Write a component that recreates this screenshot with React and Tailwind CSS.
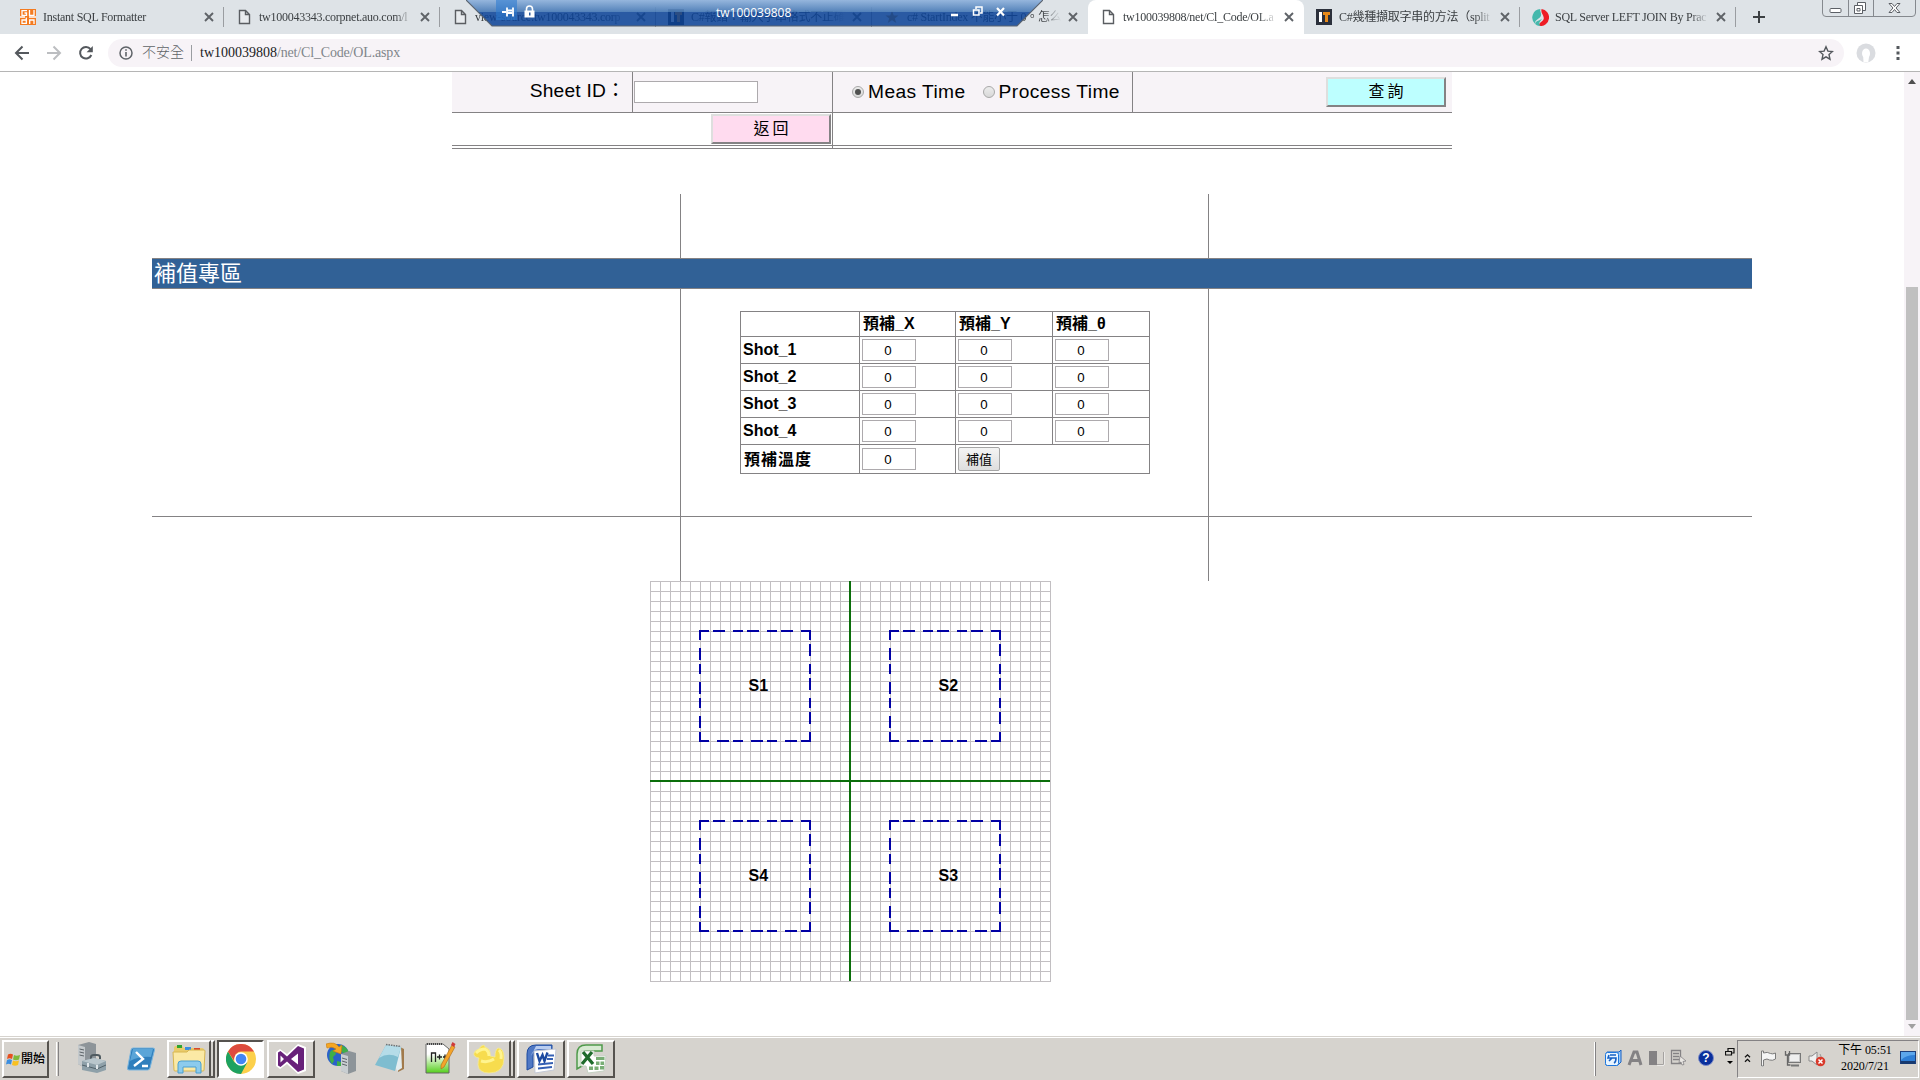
import React from "react";

const SERIF = "font-['Liberation_Serif','Noto_Sans_CJK_TC',serif]";
const SANS = "font-['Liberation_Sans','Noto_Sans_CJK_TC',sans-serif]";

/* ---------- small icons ---------- */
const CloseX = ({ className = "" }) => (
  <svg width="10" height="10" viewBox="0 0 10 10" className={className}>
    <path d="M1 1l8 8M9 1l-8 8" stroke="#5f6368" strokeWidth="1.9" fill="none" />
  </svg>
);
const PageIcon = () => (
  <svg width="16" height="16" viewBox="0 0 16 16">
    <path d="M3.5 1.5h6l4 4v9h-10z M9.5 1.5v4h4" fill="#fff" fillOpacity="0.3" stroke="#5a5d61" strokeWidth="1.4" />
  </svg>
);
const GuduIcon = () => (
  <svg width="16" height="16" viewBox="0 0 16 16">
    <rect width="16" height="16" fill="#f47b20" />
    <path d="M7 1.700H2v4.600h4.500V4H4.500M9.500 1v5.300H14V1M6.300 8.500V14.300H2V11h4M9.700 15v-4h4.300v4M0 8h5M9 8h7" stroke="#fff" strokeWidth="1.300" fill="none" />
  </svg>
);
const ItIcon = () => (
  <svg width="16" height="16" viewBox="0 0 16 16">
    <rect width="16" height="16" fill="#2b303b" />
    <rect x="3" y="3" width="3" height="10" fill="#fff" />
    <path d="M7 3h7v3h-2v7H9V6H7z" fill="#e88a1a" />
  </svg>
);
const StarIcon = () => (
  <svg width="16" height="16" viewBox="0 0 16 16">
    <path d="M8 2l1.800 4.500h4.700l-3.700 3.100L12.300 14 8 11.300 3.700 14l1.500-4.400L1.500 6.500h4.700z" fill="#b0803a" />
  </svg>
);
const SwirlIcon = () => (
  <svg width="17" height="17" viewBox="0 0 16 16">
    <path d="M8 0A8 8 0 0 0 3 14C2 10 8 9 8.500 6 9 3 7 2 8 0z" fill="#45b8ac" />
    <path d="M9 0a8 8 0 0 1-2 16c-2-3 5-4 4-8C10.500 5 8 4 9 0z" fill="#ee1c25" />
    <path d="M3 14c2 2 4 2 5 2-3-3 1-5 1.500-7C8 11 3 11 3 14z" fill="#45b8ac" />
  </svg>
);

const tabs = [
  { icon: <GuduIcon />, title: "Instant SQL Formatter" },
  { icon: <PageIcon />, title: "tw100043343.corpnet.auo.com/l" },
  { icon: <PageIcon />, title: "view-source:tw100043343.corp" },
  { icon: <ItIcon />, title: "C#報錯：輸入字串格式不正確" },
  { icon: <StarIcon />, title: "c# StartIndex 不能小于 0。怎么" },
  { icon: <PageIcon />, title: "tw100039808/net/Cl_Code/OL.a", active: true },
  { icon: <ItIcon />, title: "C#幾種擷取字串的方法（split" },
  { icon: <SwirlIcon />, title: "SQL Server LEFT JOIN By Prac" },
];

const Tab = ({ icon, title, active, noSep }) => (
  <div
    className={
      "relative flex h-[34px] w-[216px] shrink-0 items-center pl-3 " +
      (active ? "rounded-t-lg bg-white" : "")
    }
  >
    <span className="flex w-6 shrink-0">{icon}</span>
    <span className="-ml-px w-[154px] shrink-0 overflow-hidden whitespace-nowrap text-[12px] leading-[20px] tracking-[-0.25px] text-[#3c4043] [mask-image:linear-gradient(to_right,black_88%,transparent)]">
      {title}
    </span>
    <CloseX className="ml-[7px]" />
    {!noSep && !active && <span className="ml-auto h-5 w-px bg-[#9a9da1]" />}
  </div>
);

const RemoteBar = () => (
  <div className="absolute left-[466px] top-0 h-[27px] w-[577px]">
    <svg width="577" height="27" viewBox="0 0 577 27" className="absolute inset-0">
      <defs>
        <linearGradient id="rdpTop" x1="0" y1="0" x2="0" y2="1">
          <stop offset="0" stopColor="#8fb2dc" />
          <stop offset="1" stopColor="#4779b5" />
        </linearGradient>
        <clipPath id="rdpShape">
          <path d="M0 0h577l-26 26H26z" />
        </clipPath>
      </defs>
      <g clipPath="url(#rdpShape)">
        <rect width="577" height="12" fill="url(#rdpTop)" fillOpacity="0.92" />
        <rect y="12" width="577" height="15" fill="#0a4297" fillOpacity="0.85" />
        <rect x="30" y="0" width="21" height="20" fill="#2f7bd0" fillOpacity="0.6" />
      </g>
      <path d="M0 0l26 26h525l26-26" fill="none" stroke="#5b6470" strokeWidth="1.2" />
      <path d="M36 12h4M41 7.500v9M41 10.500h5M41 13h5M47 7.500v9" stroke="#fff" strokeWidth="1.800" />
      <path d="M60.500 11V9a3 3 0 0 1 6 0v2" fill="none" stroke="#fff" strokeWidth="1.600" />
      <rect x="58.500" y="10.500" width="10" height="7" fill="#fff" />
      <rect x="63" y="12.500" width="1.500" height="3" fill="#2a5a9f" />
      <path d="M485 15h7" stroke="#fff" strokeWidth="2.500" />
      <path d="M510 9V7h6v6h-2M507.500 10h5.500v5h-5.500z" fill="none" stroke="#fff" strokeWidth="1.500" />
      <path d="M531 8l7 7.500M538 8l-7 7.500" stroke="#fff" strokeWidth="2.200" />
    </svg>
    <span className="absolute left-[250px] top-[4px] font-['Open_Sans',sans-serif] text-[12px] leading-[18px] text-white">
      tw100039808
    </span>
  </div>
);

const WindowButtons = () => (
  <svg width="94" height="18" viewBox="0 0 94 18" className="absolute right-[4px] top-0">
    <path d="M.5 0v13q0 3.500 3.500 3.500h86q3.500 0 3.500-3.500V0M26.500 0v16M51.500 0v16" fill="none" stroke="#85898e" />
    <rect x="8" y="8.500" width="11" height="4" rx="1" fill="#fff" stroke="#5c6066" />
    <path d="M35.500 5.500V2.500h8v8h-3M32.500 5.500h8v8h-8zM35 8.500h3v2.500h-3z" fill="#fff" stroke="#5c6066" />
    <path d="M67 3.500h3l2.500 3 2.500-3h3l-4 4.500 4 4.500h-3l-2.500-3-2.500 3h-3l4-4.500z" fill="#fff" stroke="#5c6066" />
  </svg>
);

const TabStrip = () => (
  <div className={"relative flex h-[34px] shrink-0 bg-[#dee3e7] pl-2 " + SERIF}>
    {tabs.map((t, i) => (
      <Tab key={i} {...t} noSep={i === 4} />
    ))}
    <svg width="14" height="14" viewBox="0 0 14 14" className="ml-4 mt-[10px]">
      <path d="M7 1v12M1 7h12" stroke="#3c4043" strokeWidth="2" />
    </svg>
    <RemoteBar />
    <WindowButtons />
  </div>
);

const Toolbar = () => (
  <div className={"flex h-[38px] shrink-0 items-center border-b border-[#b5b5b5] bg-white pl-[14px] " + SERIF}>
    <svg width="16" height="16" viewBox="0 0 16 16">
      <path d="M15 8H2.500M8.500 1.500L2 8l6.500 6.500" fill="none" stroke="#54585d" strokeWidth="2" />
    </svg>
    <svg width="16" height="16" viewBox="0 0 16 16" className="ml-4">
      <path d="M1 8h12.500M7.500 1.500L14 8l-6.500 6.500" fill="none" stroke="#bcbec1" strokeWidth="2" />
    </svg>
    <svg width="16" height="16" viewBox="0 0 16 16" className="ml-4">
      <path d="M13.300 10A5.800 5.800 0 1 1 12.500 4.200" fill="none" stroke="#54585d" strokeWidth="2" />
      <path d="M14.800 1v6.200H8.600z" fill="#54585d" />
    </svg>
    <div className="ml-[14px] flex h-7 w-[1736px] items-center rounded-full bg-[#f7f3f7] pl-[11px] pr-[10px] text-[14px] leading-none">
      <svg width="14" height="14" viewBox="0 0 14 14">
        <circle cx="7" cy="7" r="6" fill="none" stroke="#5f6368" strokeWidth="1.500" />
        <path d="M7 6v4.500M7 3.200v1.600" stroke="#5f6368" strokeWidth="1.600" />
      </svg>
      <span className="ml-[9px] font-light text-[#5f6368]">不安全</span>
      <span className="ml-[7px] mr-[8px] h-4 w-px bg-[#9a9da1]" />
      <span className="pt-px text-[#202124]">tw100039808</span>
      <span className="pt-px tracking-[-0.17px] text-[#80858a]">/net/Cl_Code/OL.aspx</span>
      <svg width="16" height="16" viewBox="0 0 16 16" className="ml-auto">
        <path d="M8 1.800l1.900 4.300 4.600.4-3.500 3.100 1 4.600L8 11.800l-4 2.400 1-4.600L1.500 6.500l4.600-.4z" fill="none" stroke="#54585d" strokeWidth="1.400" />
      </svg>
    </div>
    <svg width="20" height="20" viewBox="0 0 20 20" className="ml-[12px]">
      <circle cx="10" cy="10" r="9.500" fill="#dadce0" />
      <path d="M7.500 19l-.3-5C5 11 6 5.500 10 5.500s5 5.500 3 8.500l-.7 5z" fill="#fff" />
    </svg>
    <svg width="4" height="16" viewBox="0 0 4 16" className="ml-[20px]">
      <rect x=".5" y="1" width="3" height="3" fill="#54585d" />
      <rect x=".5" y="6.500" width="3" height="3" fill="#54585d" />
      <rect x=".5" y="12" width="3" height="3" fill="#54585d" />
    </svg>
  </div>
);

/* ---------- page ---------- */
const Radio = ({ checked }) => (
  <span className="flex h-3 w-3 items-center justify-center rounded-full border border-[#a8a8a8] bg-gradient-to-b from-[#ececec] to-[#d8d8d8]">
    {checked && <span className="h-1.5 w-1.5 rounded-full bg-[#505050]" />}
  </span>
);

const bevel =
  "flex h-[30px] w-[120px] items-center justify-center border-2 border-t-[#dedfde] border-l-[#dedfde] border-r-[#848284] border-b-[#848284] pl-[3px] text-[16px] leading-none tracking-[3px] text-black";

const QueryPanel = () => (
  <div className={"ml-[452px] w-[1000px] text-[19.2px] leading-none text-black " + SANS}>
    <div className="flex h-[41px] border-b border-[#848284] bg-[#f7f3f7]">
      <div className="flex w-[181px] items-center justify-end border-r border-[#848284] pb-[2px] pr-[7px]">
        <span className="tracking-[0.2px]">Sheet ID</span>
        <span className="w-[19px]">：</span>
      </div>
      <div className="w-[200px] border-r border-[#848284] pl-px pt-[9px]">
        <div className="h-[22px] w-[124px] border border-[#adaaad] bg-white" />
      </div>
      <div className="flex w-[300px] items-center border-r border-[#848284] pl-[19px] tracking-[0.42px]">
        <Radio checked />
        <span className="ml-[4px]">Meas Time</span>
        <span className="ml-[17px]">
          <Radio />
        </span>
        <span className="ml-[4px]">Process Time</span>
      </div>
      <div className="flex w-[319px] justify-end pr-[6px] pt-[5px]">
        <div className={bevel + " bg-[#bdffff]"}>查詢</div>
      </div>
    </div>
    <div className="flex h-[36px] border-b-4 border-double border-[#848284]">
      <div className="flex h-[36px] w-[381px] justify-end border-r border-[#848284] pr-px pt-px">
        <div className={bevel + " bg-[#ffdbef]"}>返回</div>
      </div>
    </div>
  </div>
);

const NumBox = () => (
  <div className="h-[22px] w-[54px] border border-[#adaaad] bg-white pr-[2px] text-center text-[13.3px] leading-[21px] text-black">
    0
  </div>
);

const Cell = ({ children, className = "" }) => (
  <div className={"flex items-center border-r border-b border-[#848284] pl-[2px] " + className}>{children}</div>
);

const OffsetTable = () => (
  <div
    className={
      "ml-[59px] grid w-[410px] grid-cols-[119px_96px_97px_97px] grid-rows-[25px_27px_27px_27px_27px_29px] border-l border-t border-[#848284] text-[16px] leading-none text-black " +
      SANS
    }
  >
    <Cell />
    {["預補_X", "預補_Y", "預補_θ"].map((h) => (
      <Cell key={h} className="pl-[3px] font-bold">
        {h}
      </Cell>
    ))}
    {[1, 2, 3, 4].map((n) => (
      <React.Fragment key={n}>
        <Cell className="font-bold">Shot_{n}</Cell>
        <Cell>
          <NumBox />
        </Cell>
        <Cell>
          <NumBox />
        </Cell>
        <Cell>
          <NumBox />
        </Cell>
      </React.Fragment>
    ))}
    <Cell className="pl-[3px] pt-px font-bold tracking-[1px]">預補溫度</Cell>
    <Cell>
      <NumBox />
    </Cell>
    <Cell className="col-span-2">
      <div className="flex h-6 w-[42px] items-center justify-center rounded-[2px] border border-[#a5a5a5] bg-gradient-to-b from-[#f4f4f4] to-[#dedede] text-[13px]">
        補值
      </div>
    </Cell>
  </div>
);

const Columns = ({ height, children }) => (
  <div className={"flex " + height}>
    <div className="w-[528px]" />
    <div className="w-[528px] border-l border-[#848284]">{children}</div>
    <div className="w-[544px] border-l border-[#848284]" />
  </div>
);

const ticks = Array.from({ length: 41 }, (_, i) => i * 10 + 0.5);
const shots = [
  { x: 50, y: 50, label: "S1" },
  { x: 240, y: 50, label: "S2" },
  { x: 240, y: 240, label: "S3" },
  { x: 50, y: 240, label: "S4" },
];

const ShotMap = () => (
  <svg width="401" height="401" viewBox="0 0 401 401" className="ml-[650px] block">
    {ticks.map((t) => (
      <path key={t} d={`M${t} 0V401M0 ${t}H401`} stroke="#c2bfc2" strokeWidth="1" />
    ))}
    <path d="M200 0V400M0 200H400" stroke="#0b6e0b" strokeWidth="2" />
    {shots.map(({ x, y, label }) => (
      <g key={label}>
        <g stroke="#0000a5" strokeWidth="2" strokeDasharray="10 4 12 8">
          <line x1={x - 1} y1={y} x2={x + 111} y2={y} />
          <line x1={x + 110} y1={y - 1} x2={x + 110} y2={y + 111} />
          <line x1={x + 111} y1={y + 110} x2={x - 1} y2={y + 110} />
          <line x1={x} y1={y + 111} x2={x} y2={y - 1} />
        </g>
        <text x={x + 48.5} y={y + 60} className="font-['Liberation_Sans',sans-serif] text-[16px] font-bold" fill="#000">
          {label}
        </text>
      </g>
    ))}
  </svg>
);

const ScrollBar = () => (
  <div className="flex w-4 shrink-0 flex-col items-center bg-[#f7f3f7]">
    <svg width="8" height="5" viewBox="0 0 8 5" className="mt-[7px]">
      <path d="M4 0l4 5H0z" fill="#4f4f4f" />
    </svg>
    <div className="mt-[203px] h-[733px] w-3 bg-[#c0c0c0]" />
    <svg width="8" height="5" viewBox="0 0 8 5" className="mt-[4px]">
      <path d="M0 0h8L4 5z" fill="#a0a0a0" />
    </svg>
  </div>
);

const Page = () => (
  <div className="flex h-[964px] shrink-0 overflow-hidden bg-white">
    <div className="w-[1904px]">
      <QueryPanel />
      <div className="ml-[152px] mt-[45px] w-[1600px]">
        <Columns height="h-[64px]" />
        <div className={"flex h-[31px] items-center border-y border-[#848284] bg-[#316196] pl-[2px] text-[22px] leading-none text-white " + SANS}>
          補值專區
        </div>
        <Columns height="h-[227px]">
          <div className="h-[22px]" />
          <OffsetTable />
        </Columns>
        <div className="h-px bg-[#848284]" />
        <Columns height="h-[64px]" />
      </div>
      <ShotMap />
    </div>
    <ScrollBar />
  </div>
);

/* ---------- taskbar ---------- */
const raised =
  "flex h-[38px] items-center justify-center border-2 border-t-white border-l-white border-r-[#56534f] border-b-[#56534f] bg-[#d6d3ce]";

const StartFlag = () => (
  <svg width="15" height="15" viewBox="0 0 15 15">
    <path d="M2 2.500q2.500-1.500 5 0L6 7q-2.500-1.500-5 0z" fill="#e8501f" />
    <path d="M8 3q2.500 1.500 6 0l-1 4.500q-3 1.500-6 0z" fill="#7fb93a" />
    <path d="M1 8q2.500-1.500 5 0l-1 4.500q-2.500-1.500-5 0z" fill="#3b8ee0" />
    <path d="M7 8.500q2.500 1.500 6 0L12 13q-3 1.500-6 0z" fill="#f9c021" />
  </svg>
);
const ServerIcon = () => (
  <svg width="30" height="32" viewBox="0 0 30 32">
    <path d="M1 3l11-3 7 2v20l-11 4-7-4z" fill="#8d9499" />
    <path d="M1 3l7 2v21l-7-4z" fill="#c4c9cc" />
    <path d="M2.500 7l4.500 1M2.500 10l4.500 1M2.500 13l4.500 1" stroke="#5d6469" />
    <path d="M14 17v-2q0-2 3-2h3q3 0 3 2v2" fill="none" stroke="#4f5a60" strokeWidth="2" />
    <path d="M5 19l12-3 12 3v9l-9 3-15-3z" fill="#8ea0a9" />
    <path d="M5 19l12-3 12 3-9 4z" fill="#b9c6cc" />
    <path d="M5 23l15 4 9-4" fill="none" stroke="#52616a" />
    <path d="M11 21v4M20 23v4" stroke="#dfe6ea" strokeWidth="2" />
  </svg>
);
const PowerShellIcon = () => (
  <svg width="28" height="24" viewBox="0 0 28 24">
    <path d="M6 1h20q2 0 1.500 2L23 21q-.5 2-2.500 2H2Q0 23 .500 21L4 3q.4-2 2-2z" fill="#2f7fbd" stroke="#7cb6de" />
    <path d="M6 2h20l-2 8Q13 9 3 14z" fill="#5aa5d8" />
    <path d="M9 5l7 7-9 7M15 19h6" fill="none" stroke="#fff" strokeWidth="2.400" />
  </svg>
);
const ExplorerIcon = () => (
  <svg width="34" height="30" viewBox="0 0 34 30">
    <path d="M2 4q0-2 2-2h6l2 2h18q2 0 2 2v20H2z" fill="#e9cb6b" />
    <rect x="5" y="1" width="5" height="3" fill="#2fa52f" />
    <rect x="13" y="3" width="6" height="3" fill="#3b8ee0" />
    <rect x="22" y="4" width="6" height="3" fill="#d9472b" />
    <path d="M1 8h14l2-2h15q1 0 1 1l-1 19q0 1-1 1H3q-1 0-1-1z" fill="#fbe9a5" stroke="#d8b650" />
    <path d="M6 29V20q0-3 3-3h17q3 0 3 3v9h-5v-6H11v6z" fill="#8ccbed" stroke="#4a9fd0" />
  </svg>
);
const ChromeIcon = () => (
  <svg width="30" height="30" viewBox="0 0 30 30">
    <circle cx="15" cy="15" r="15" fill="#fcd04b" />
    <path d="M2 7.500A15 15 0 0 0 15 30l6.200-11.500L15 15 8.500 18.500z" fill="#1da261" />
    <path d="M2 7.500A15 15 0 0 1 28 7.500H15q-6 0-7 9z" fill="#dd4b3e" />
    <circle cx="15" cy="15" r="6.800" fill="#fff" />
    <circle cx="15" cy="15" r="5.300" fill="#4285f4" />
  </svg>
);
const VsIcon = () => (
  <svg width="32" height="30" viewBox="0 0 32 30">
    <path d="M1 8l4-3 7 5L23 0l8 3v24l-8 3-11-10-7 5-4-3z" fill="#fff" />
    <path d="M23 2l6 2.500v21L23 28 12 17.500 5.500 23 3 21.500v-13L5.500 7 12 12.500z M23 9.500L16 15l7 5.500z M5.500 11.500v7L9 15z" fill="#68217a" fillRule="evenodd" />
  </svg>
);
const GlobeServerIcon = () => (
  <svg width="31" height="32" viewBox="0 0 31 32">
    <circle cx="12" cy="13" r="11" fill="#2b62c9" />
    <path d="M4 10q2-3 5-2l1 4-3 3 1 4-2 3q-4-5-2-12zM14 3q7 1 9 8l-5 1-4-4zM11 19l4 1v4h-4z" fill="#3fae49" />
    <path d="M0 2q9-3 13 3l3-2-1 9-8-3 3-2Q6 4 1 6z" fill="#f5a623" stroke="#c77a0a" strokeWidth=".6" />
    <path d="M15 12l8-3 7 2v18l-8 3-7-3z" fill="#8d9499" />
    <path d="M15 12l7 2v18l-7-3z" fill="#c9ced1" />
    <path d="M16 16l5 1.500M16 19l5 1.500M16 22l5 1.500" stroke="#5d6469" />
  </svg>
);
const NotepadIcon = () => (
  <svg width="30" height="30" viewBox="0 0 30 30">
    <path d="M25 4l4 2v20l-6 3z" fill="#a17a4c" />
    <path d="M12 2l14 2 1 21-5 3z" fill="#e3ecef" />
    <path d="M11 2l15 2-6 24L0 22z" fill="#7fbdd0" />
    <path d="M11 2l15 2-3 10Q13 9 4 15z" fill="#b5dce8" />
    <path d="M11 1.500l15 2" stroke="#6d7478" strokeWidth="1.500" strokeDasharray="1.500 1" />
  </svg>
);
const NppIcon = () => (
  <svg width="31" height="32" viewBox="0 0 31 32">
    <defs>
      <linearGradient id="nppBg" x1="0" y1="0" x2="0" y2="1">
        <stop offset=".35" stopColor="#fff" />
        <stop offset="1" stopColor="#55cf1c" />
      </linearGradient>
    </defs>
    <path d="M1 2h17l6 5v24H1z" fill="url(#nppBg)" stroke="#666" />
    <path d="M2 2h16" stroke="#444" strokeWidth="2" strokeDasharray="1 1" />
    <path d="M6.500 20v-9h4v9M12 15h5M14.500 12.500v5M18 15h4M20 12.500v5" fill="none" stroke="#222" strokeWidth="1.300" />
    <path d="M27 3l3 2-11 20-3 2v-4z" fill="#f4a42a" stroke="#a8681a" strokeWidth=".6" />
    <path d="M27.500 0l3 2-1.500 3-3-2z" fill="#cf3a3a" />
  </svg>
);
const YellowIcon = () => (
  <svg width="32" height="30" viewBox="0 0 32 30">
    <path d="M6 14q-6-1-5-5 1-3 5-4 2-4 5-4 1 3 3 3 4 2 3 8l5 1q0-7 3-9 6 0 6 10 0 15-15 15Q6 29 5 21q0-4 1-7z" fill="#f7dc4e" stroke="#f2ea9a" strokeWidth=".8" />
    <path d="M3 9q4-4 9-4 4 2 4 7M26 6q3 3 2 9M8 17q7 2 13-2" fill="none" stroke="#fff48f" strokeWidth="3" />
  </svg>
);
const WordIcon = () => (
  <svg width="31" height="30" viewBox="0 0 31 30">
    <path d="M1 26V10Q1 1 10 1h16v6H13q-6 0-6 6v10z" fill="#4f78c4" stroke="#1d4aa0" />
    <path d="M10 2h15v3H12Q6 6 5 12z" fill="#b9cdf0" />
    <path d="M8 7l22-2-2 21-19 3z" fill="#fff" stroke="#c3c9d6" />
    <path d="M11 9l2.500 8 3-6 2 6 3-8.500" fill="none" stroke="#1d4aa0" strokeWidth="2.400" />
    <path d="M22 11.500h6M21 15h6M12 20.500l15-1.500M12 24.500l14-1.500" stroke="#3560b4" strokeWidth="1.800" />
  </svg>
);
const ExcelIcon = () => (
  <svg width="31" height="30" viewBox="0 0 31 30">
    <path d="M1 25V10Q1 1 10 1h16v6H10q-4 0-4 5v10z" fill="#d7ead2" stroke="#4f9a4b" strokeWidth="1.500" />
    <path d="M5 7h13v5h12l-2 15-16 2-2-7H5z" fill="#fff" stroke="#c5d2c3" />
    <path d="M20 13h8.500v3H20zM20 17.500h3.500V21H20zM24.500 17.500H28V21h-3.500zM13 22.500h4V26h-4zM18.500 22.500h4V26h-4zM24 22h4v3.500h-4z" fill="#79ae75" />
    <path d="M7 8l10 12M16 8L6 20" stroke="#1f6b2c" strokeWidth="3.300" />
  </svg>
);

const Taskbar = () => (
  <div className="flex h-[44px] shrink-0 flex-col bg-[#d6d3ce]">
    <div className="h-px shrink-0 bg-[#d6d3ce]" />
    <div className="h-px shrink-0 bg-white" />
    <div className="flex h-[42px] pt-[2px]">
      <div className={raised + " ml-[2px] w-[47px] text-[12px] leading-none text-black " + SANS}>
        <StartFlag />
        <span className="font-medium">開始</span>
      </div>
      <div className="ml-[7px] mt-[2px] h-[34px] w-[3px] border-l border-r border-l-white border-r-[#848284]" />
      <div className="ml-[18px] flex h-9 w-[30px] items-center">
        <ServerIcon />
      </div>
      <div className="ml-[20px] flex h-[38px] w-[28px] items-center">
        <PowerShellIcon />
      </div>
      <div className={raised + " ml-[12px] w-[44px]"}>
        <ExplorerIcon />
      </div>
      <div className="h-[38px] w-1 border-b-2 border-r-2 border-t-2 border-[#56534f] border-t-white" />
      <div className="ml-[2px] flex h-[38px] w-[47px] items-center justify-center border-2 border-b-white border-l-[#56534f] border-r-white border-t-[#56534f] bg-white">
        <ChromeIcon />
      </div>
      <div className={raised + " ml-[3px] w-[48px]"}>
        <VsIcon />
      </div>
      <div className="ml-[11px] flex h-9 w-[31px] items-center">
        <GlobeServerIcon />
      </div>
      <div className="ml-[18px] flex h-9 w-[30px] items-center">
        <NotepadIcon />
      </div>
      <div className="ml-[20px] flex h-9 w-[31px] items-center">
        <NppIcon />
      </div>
      <div className={raised + " ml-[11px] w-[44px]"}>
        <YellowIcon />
      </div>
      <div className="h-[38px] w-1 border-b-2 border-r-2 border-t-2 border-[#56534f] border-t-white" />
      <div className={raised + " ml-[2px] w-[48px]"}>
        <WordIcon />
      </div>
      <div className={raised + " ml-[2px] w-[48px]"}>
        <ExcelIcon />
      </div>
      <div className="ml-auto mt-[2px] h-[34px] w-[2px] border-l border-r border-l-white border-r-[#848284]" />
      <div className="ml-[8px] flex h-[35px] items-center">
        <svg width="18" height="18" viewBox="0 0 18 18">
          <path d="M3 3h12l2-2v12l-3 3H2z" fill="#9cc8f5" stroke="#1660c4" />
          <rect x="1.500" y="3.500" width="13" height="13" rx="2" fill="#e8f4ff" stroke="#1c76dd" />
          <path d="M5 6l-1 3h8q0 4-2 5M6 6h6M5 12l3-3" fill="none" stroke="#1660c4" strokeWidth="1.600" />
        </svg>
        <svg width="16" height="16" viewBox="0 0 16 16" className="ml-[5px]">
          <path d="M2 15L7 2h3l4 13M4.500 10.500h8" fill="none" stroke="#848284" strokeWidth="3" />
        </svg>
        <svg width="16" height="16" viewBox="0 0 16 16" className="ml-[6px]">
          <rect x="0" y="1" width="8" height="14" fill="#848284" />
          <path d="M15 2v13H8" fill="none" stroke="#fff" />
          <path d="M14.500 2v12.500H8" fill="none" stroke="#a5a2a0" />
        </svg>
        <svg width="17" height="17" viewBox="0 0 17 17" className="ml-[5px]">
          <path d="M1.500 1.500h9v13h-9zM3 4.500h6M3 7.500h6M3 10.500h6" fill="none" stroke="#848284" strokeWidth="1.300" />
          <path d="M10 7l6 5-3 .5 1 3-2 .5-1-3-2 1z" fill="#e8e6e2" stroke="#848284" strokeWidth=".8" />
        </svg>
        <span className="ml-[11px] flex h-4 w-4 items-center justify-center rounded-full border border-[#7d8cc8] bg-[#0a2f9c] font-['Liberation_Sans',sans-serif] text-[12px] font-bold leading-none text-white">
          ?
        </span>
        <svg width="10" height="22" viewBox="0 0 10 22" className="ml-[11px]">
          <path d="M3 4V1.500h6V6H7M.5 4.500h6V8h-6z" fill="none" stroke="#111" strokeWidth="1.200" />
          <path d="M2 14h6l-3 3z" fill="#000" />
        </svg>
      </div>
      <div className="ml-[2px] mr-px flex h-[38px] w-[182px] items-center border border-b-white border-l-[#848284] border-r-white border-t-[#848284] pb-[2px]">
        <svg width="7" height="10" viewBox="0 0 7 10" className="ml-[6px] shrink-0">
          <path d="M1 4.300l2.500-2.500L6 4.300M1 8.800l2.500-2.500L6 8.800" fill="none" stroke="#111" strokeWidth="1.300" />
        </svg>
        <svg width="17" height="17" viewBox="0 0 17 17" className="ml-[9px] shrink-0">
          <path d="M2.500 1v15.500" stroke="#fff" strokeWidth="3" />
          <path d="M1.500 1v15h2v-6q4-2 6 0 3 1 6-1V3q-3 1.500-5 .500-3-2-7-.500V1z" fill="#f4f4f4" stroke="#7b7b7b" />
        </svg>
        <svg width="17" height="17" viewBox="0 0 17 17" className="ml-[7px] shrink-0">
          <rect x="4.500" y="3.500" width="12" height="9" fill="#c9c9c9" stroke="#777" />
          <rect x="6" y="5" width="9" height="6" fill="#efefef" />
          <path d="M7 15.500h8" stroke="#777" strokeWidth="2" />
          <path d="M1.500 1v4h4V1M3.500 5v10h3" fill="none" stroke="#666" strokeWidth="1.300" />
        </svg>
        <svg width="18" height="17" viewBox="0 0 18 17" className="ml-[7px] shrink-0">
          <path d="M1 6h3l5-4v13l-5-4H1z" fill="#f1f1f1" stroke="#8a8a8a" />
          <path d="M12 4q2 3 1 6" fill="none" stroke="#999" />
          <circle cx="12.500" cy="11.500" r="4.800" fill="#d93a2b" />
          <path d="M10.500 9.500l4 4M14.500 9.500l-4 4" stroke="#fff" strokeWidth="1.500" />
        </svg>
        <div className={"ml-[6px] w-[66px] whitespace-nowrap text-center text-[12px] leading-[16px] tracking-[-0.1px] text-black " + SERIF}>
          <div>下午 05:51</div>
          <div>2020/7/21</div>
        </div>
        <svg width="16" height="14" viewBox="0 0 16 14" className="ml-auto mr-[2px] shrink-0">
          <rect x=".5" y=".5" width="15" height="12" fill="#2f7fd6" stroke="#1d3f7c" />
          <path d="M1 1h14v3Q6 4 1 9z" fill="#5da7ec" />
          <rect x="1" y="10" width="14" height="3" fill="#173a70" />
        </svg>
      </div>
    </div>
  </div>
);

export default function App() {
  return (
    <div className="flex h-[1080px] w-[1920px] flex-col overflow-hidden bg-white">
      <TabStrip />
      <Toolbar />
      <Page />
      <Taskbar />
    </div>
  );
}
